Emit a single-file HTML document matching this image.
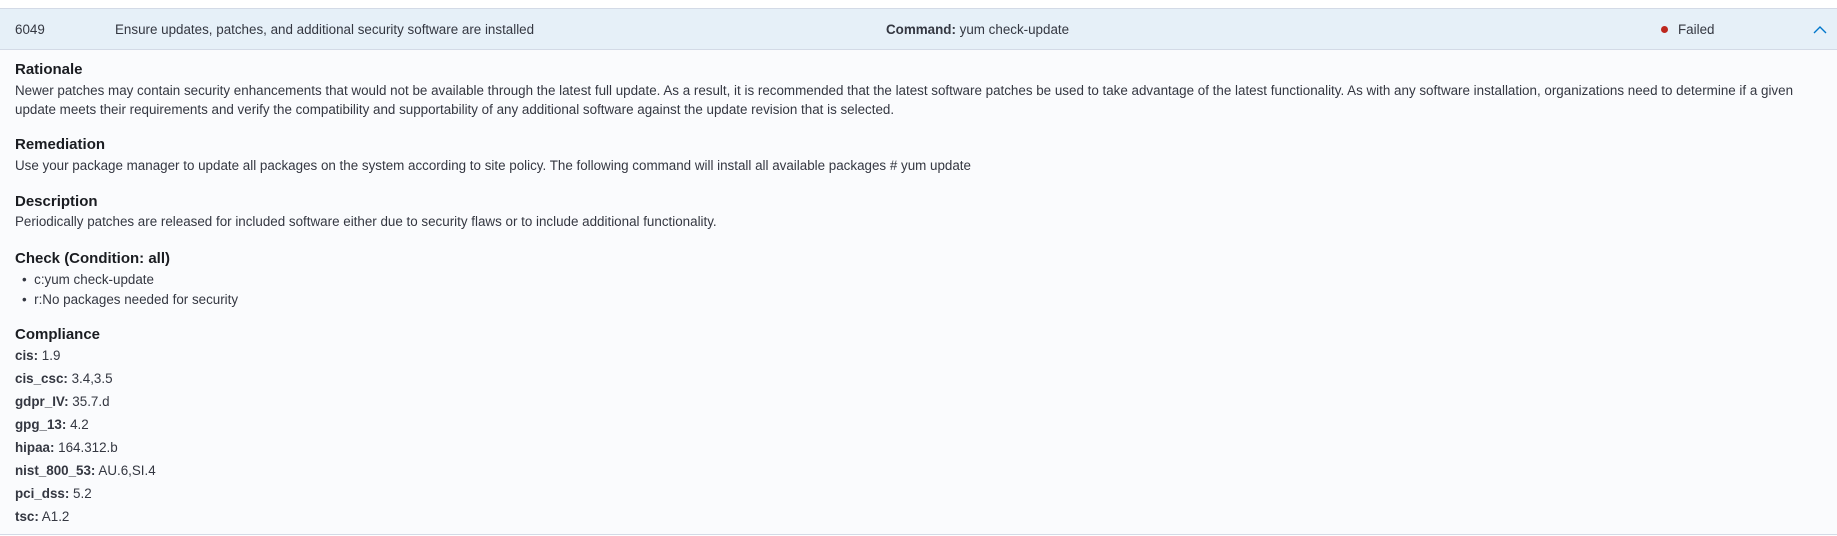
<!DOCTYPE html>
<html><head><style>
body{margin:0;width:1837px;height:536px;background:#fff;font-family:"Liberation Sans",sans-serif;color:#343741;font-size:13.4px;overflow:hidden}
.hdr{position:absolute;top:8px;left:0;width:1837px;height:40px;background:#e6f0f8;border-top:1px solid #d3dae6;border-bottom:1px solid #d3dae6}
.hdr span{position:absolute;top:13px;white-space:nowrap}
.body{position:absolute;top:50px;left:0;width:1837px;height:484px;background:#fafbfd;border-bottom:1px solid #d3dae6}
.a{position:absolute;left:15px;white-space:nowrap}
h3{margin:0;font-size:15px;font-weight:bold;color:#1a1c21}
.dot{display:block;width:7px;height:7px;border-radius:50%;background:#bd271e}
</style></head><body>
<div class="hdr">
<span style="left:15px">6049</span>
<span style="left:115px">Ensure updates, patches, and additional security software are installed</span>
<span style="left:886px"><b>Command:</b> yum check-update</span>
<span style="left:1661px;top:17px"><i class="dot"></i></span>
<span style="left:1678px">Failed</span>
<svg style="position:absolute;left:1813px;top:16px" width="14" height="10" viewBox="0 0 14 10"><path d="M1 8 L7 2 L13 8" fill="none" stroke="#0077cc" stroke-width="1.4"/></svg>
</div>
<div class="body"></div>
<div class="a" style="top:61px"><h3>Rationale</h3></div>
<div class="a" style="top:83px">Newer patches may contain security enhancements that would not be available through the latest full update. As a result, it is recommended that the latest software patches be used to take advantage of the latest functionality. As with any software installation, organizations need to determine if a given</div>
<div class="a" style="top:102px">update meets their requirements and verify the compatibility and supportability of any additional software against the update revision that is selected.</div>
<div class="a" style="top:136px"><h3>Remediation</h3></div>
<div class="a" style="top:158px">Use your package manager to update all packages on the system according to site policy. The following command will install all available packages # yum update</div>
<div class="a" style="top:193px"><h3>Description</h3></div>
<div class="a" style="top:214px">Periodically patches are released for included software either due to security flaws or to include additional functionality.</div>
<div class="a" style="top:250px"><h3>Check (Condition: all)</h3></div>
<div class="a" style="top:272px;left:22px">•&nbsp;&nbsp;c:yum check-update</div>
<div class="a" style="top:292px;left:22px">•&nbsp;&nbsp;r:No packages needed for security</div>
<div class="a" style="top:326px"><h3>Compliance</h3></div>
<div class="a" style="top:348px"><b>cis:</b> 1.9</div>
<div class="a" style="top:371px"><b>cis_csc:</b> 3.4,3.5</div>
<div class="a" style="top:394px"><b>gdpr_IV:</b> 35.7.d</div>
<div class="a" style="top:417px"><b>gpg_13:</b> 4.2</div>
<div class="a" style="top:440px"><b>hipaa:</b> 164.312.b</div>
<div class="a" style="top:463px"><b>nist_800_53:</b> AU.6,SI.4</div>
<div class="a" style="top:486px"><b>pci_dss:</b> 5.2</div>
<div class="a" style="top:509px"><b>tsc:</b> A1.2</div>
</body></html>
